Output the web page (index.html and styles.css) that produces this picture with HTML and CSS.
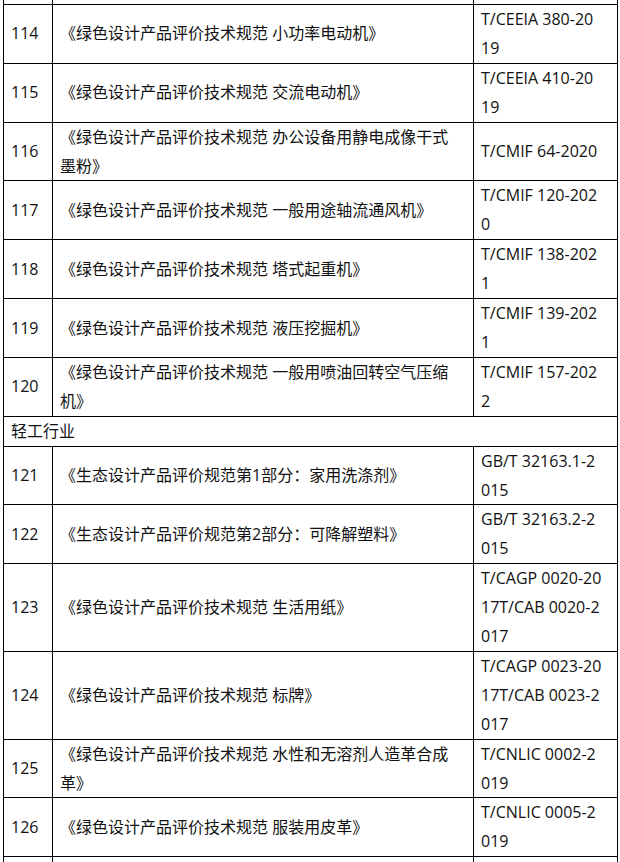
FILE: index.html
```html
<!DOCTYPE html>
<html lang="zh-CN">
<head>
<meta charset="utf-8">
<title>绿色设计产品评价标准</title>
<link rel="stylesheet" href="styles.css">
</head>
<body>
<table class="std">
  <colgroup>
    <col class="c-no">
    <col class="c-name">
    <col class="c-code">
  </colgroup>
  <tbody>
    <tr class="stub"><td></td><td></td><td></td></tr>
    <tr><td>114</td><td>《绿色设计产品评价技术规范 小功率电动机》</td><td>T/CEEIA 380-20<br>19</td></tr>
    <tr><td>115</td><td>《绿色设计产品评价技术规范 交流电动机》</td><td>T/CEEIA 410-20<br>19</td></tr>
    <tr><td>116</td><td>《绿色设计产品评价技术规范 办公设备用静电成像干式墨粉》</td><td>T/CMIF 64-2020</td></tr>
    <tr><td>117</td><td>《绿色设计产品评价技术规范 一般用途轴流通风机》</td><td>T/CMIF 120-202<br>0</td></tr>
    <tr><td>118</td><td>《绿色设计产品评价技术规范 塔式起重机》</td><td>T/CMIF 138-202<br>1</td></tr>
    <tr><td>119</td><td>《绿色设计产品评价技术规范 液压挖掘机》</td><td>T/CMIF 139-202<br>1</td></tr>
    <tr><td>120</td><td>《绿色设计产品评价技术规范 一般用喷油回转空气压缩机》</td><td>T/CMIF 157-202<br>2</td></tr>
    <tr><td colspan="3">轻工行业</td></tr>
    <tr><td>121</td><td>《生态设计产品评价规范第1部分：家用洗涤剂》</td><td>GB/T 32163.1-2<br>015</td></tr>
    <tr><td>122</td><td>《生态设计产品评价规范第2部分：可降解塑料》</td><td>GB/T 32163.2-2<br>015</td></tr>
    <tr><td>123</td><td>《绿色设计产品评价技术规范 生活用纸》</td><td>T/CAGP 0020-20<br>17T/CAB 0020-2<br>017</td></tr>
    <tr><td>124</td><td>《绿色设计产品评价技术规范 标牌》</td><td>T/CAGP 0023-20<br>17T/CAB 0023-2<br>017</td></tr>
    <tr><td>125</td><td>《绿色设计产品评价技术规范 水性和无溶剂人造革合成革》</td><td>T/CNLIC 0002-2<br>019</td></tr>
    <tr><td>126</td><td>《绿色设计产品评价技术规范 服装用皮革》</td><td>T/CNLIC 0005-2<br>019</td></tr>
    <tr class="stub-end"><td></td><td></td><td></td></tr>
  </tbody>
</table>
</body>
</html>
```
FILE: styles.css
```css
html, body {
  margin: 0;
  padding: 0;
  background: #fff;
}

body {
  font-family: "Open Sans", "Noto Sans CJK SC", sans-serif;
  font-size: 16px;
  line-height: 28.9px;
  color: #111;
}

.std {
  border-collapse: collapse;
  table-layout: fixed;
  width: 614px;
  margin-left: 3px;
}

.c-no { width: 49px; }
.c-name { width: 421px; }
.c-code { width: 144px; }

.std td {
  border: 1px solid #000;
  padding: 0 7px;
  vertical-align: middle;
  word-break: break-all;
}

.std td:nth-child(2) {
  padding-right: 10px;
}

.stub td {
  border-top: 0;
  height: 4px;
  padding: 0;
}

.stub-end td {
  border-bottom: 0;
  height: 40px;
  padding: 0;
}
```
